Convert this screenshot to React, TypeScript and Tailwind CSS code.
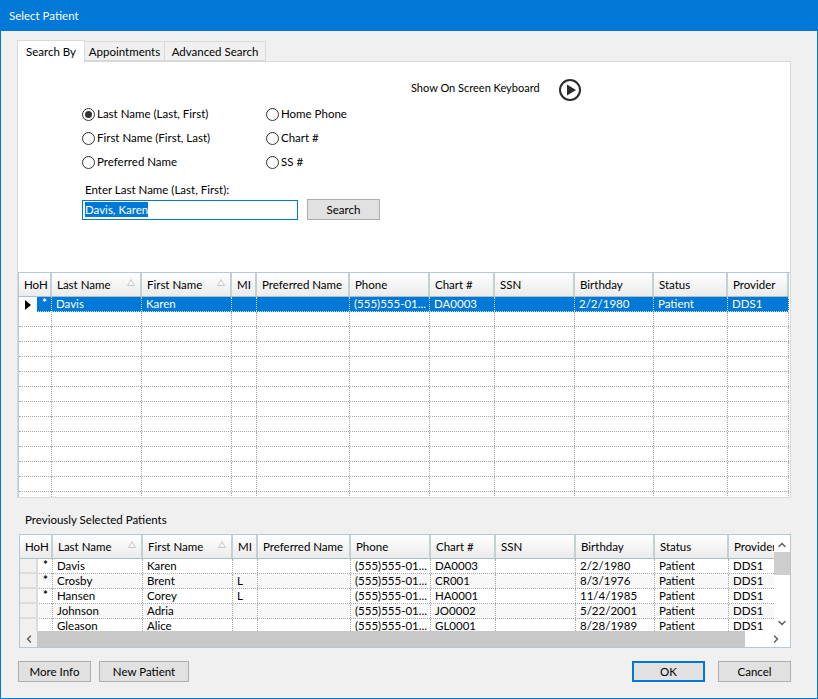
import React from "react";
import { ChevronDown, ChevronLeft, ChevronRight, ChevronUp } from "lucide-react";

const COLUMNS = [
  "HoH",
  "Last Name",
  "First Name",
  "MI",
  "Preferred Name",
  "Phone",
  "Chart #",
  "SSN",
  "Birthday",
  "Status",
  "Provider",
];

const GRID_COLS = "grid grid-cols-[33px_90px_90px_25px_93px_80px_65px_80px_79px_74px_61px]";

const RECENT_PATIENTS = [
  ["*", "Davis", "Karen", "", "", "(555)555-01...", "DA0003", "", "2/2/1980", "Patient", "DDS1"],
  ["*", "Crosby", "Brent", "L", "", "(555)555-01...", "CR001", "", "8/3/1976", "Patient", "DDS1"],
  ["*", "Hansen", "Corey", "L", "", "(555)555-01...", "HA0001", "", "11/4/1985", "Patient", "DDS1"],
  ["", "Johnson", "Adria", "", "", "(555)555-01...", "JO0002", "", "5/22/2001", "Patient", "DDS1"],
  ["", "Gleason", "Alice", "", "", "(555)555-01...", "GL0001", "", "8/28/1989", "Patient", "DDS1"],
];

const SELECTED_ROW = ["*", "Davis", "Karen", "", "", "(555)555-01...", "DA0003", "", "2/2/1980", "Patient", "DDS1"];

const HeaderRow = () => (
  <div className={`${GRID_COLS} h-[24px] w-[770px] shrink-0 border-b border-[#a9c0c4]`}>
    {COLUMNS.map((name) => (
      <div
        key={name}
        className="relative flex items-center overflow-hidden whitespace-nowrap border-r-2 border-[#c4d0d4] bg-gradient-to-b from-white to-[#ebebeb] pl-[5px] text-black"
      >
        {name}
        {(name === "Last Name" || name === "First Name") && (
          <svg className="absolute right-[5px] top-[6px]" width="8" height="7" viewBox="0 0 8 7">
            <path d="M4 .5 L7.5 6.5 L.5 6.5 Z" fill="none" stroke="#c8c8c8" />
          </svg>
        )}
      </div>
    ))}
  </div>
);

const RowHeader = ({ current = false }: { current?: boolean }) => (
  <div
    className={`flex h-full w-[18px] shrink-0 items-center justify-center ${
      current ? "bg-white" : "border-r-2 border-b-2 border-[#dcdcdc] bg-[#f0f0f0]"
    }`}
  >
    {current && (
      <svg width="6" height="10" viewBox="0 0 6 10">
        <path d="M0 0 L6 5 L0 10 Z" fill="#000" />
      </svg>
    )}
  </div>
);

const DataRow = ({
  cells,
  selected = false,
  current = false,
  alt = false,
  header = true,
}: {
  cells?: string[];
  selected?: boolean;
  current?: boolean;
  alt?: boolean;
  header?: boolean;
}) => {
  const values = cells ?? Array(11).fill("");
  const rowTone = selected
    ? "bg-[#0078d7] text-white border-[#d0e4f5]"
    : alt
      ? "bg-[#f8f8f8] text-black border-[#aaaaaa]"
      : "bg-white text-black border-[#aaaaaa]";

  return (
    <div className={`${GRID_COLS} h-[15px] w-[770px] shrink-0 border-b border-dotted ${rowTone}`}>
      {values.map((value, index) =>
        index === 0 ? (
          <div key={index} className="flex h-[15px] border-r border-dotted border-inherit">
            {header && <RowHeader current={current} />}
            <div className="flex-1 pl-[5px] font-bold leading-[12px]">{value}</div>
          </div>
        ) : (
          <div
            key={index}
            className="h-[14px] overflow-hidden whitespace-nowrap border-r border-dotted border-inherit pl-[4px] leading-[14px]"
          >
            {value}
          </div>
        ),
      )}
    </div>
  );
};

const Radio = ({ label, checked = false }: { label: string; checked?: boolean }) => (
  <label className="flex h-[24px] items-center gap-[2px] text-black">
    <span className="flex size-[13px] items-center justify-center rounded-full border border-[#333333] bg-white">
      {checked && <span className="size-[7px] rounded-full bg-[#333333]" />}
    </span>
    {label}
  </label>
);

const FlatButton = ({
  children,
  width,
  primary = false,
}: {
  children: React.ReactNode;
  width: string;
  primary?: boolean;
}) => (
  <button
    className={`h-[21px] ${width} bg-[#e1e1e1] text-black ${
      primary ? "border-2 border-[#0078d7]" : "border border-[#adadad]"
    }`}
  >
    {children}
  </button>
);

const App = () => {
  return (
    <div className="flex h-[699px] w-[818px] flex-col border border-[#0078d7] bg-[#f0f0f0] font-['Lato',sans-serif] text-[11.5px]">
      <div className="flex h-[30px] shrink-0 items-center bg-[#0078d7] pl-[8px] text-white">Select Patient</div>

      <div className="flex flex-1 flex-col pl-[16px] pr-[26px]">
        {/* Tabs */}
        <div className="relative z-10 mt-[8px] flex h-[22px] items-end">
          <div className="flex h-[23px] w-[68px] translate-y-[1px] items-start justify-center self-start border border-b-0 border-[#d9d9d9] bg-white pt-[2px]">
            Search By
          </div>
          <div className="flex h-[20px] w-[80px] items-center justify-center border border-l-0 border-[#d9d9d9] bg-[#f0f0f0] pt-[2px]">
            Appointments
          </div>
          <div className="flex h-[20px] w-[101px] items-center justify-center border border-l-0 border-[#d9d9d9] bg-[#f0f0f0] pt-[2px]">
            Advanced Search
          </div>
        </div>

        {/* Search panel */}
        <div className="flex h-[437px] w-[774px] shrink-0 flex-col border border-[#d9d9d9] bg-white">
          <div className="h-[210px] shrink-0">
            <div className="flex items-center pl-[393px] pt-[16px]">
              <span className="mb-[4px] w-[147px] text-[11px] text-black">Show On Screen Keyboard</span>
              <svg width="24" height="24" viewBox="0 0 24 24">
                <circle cx="12" cy="12" r="10" fill="none" stroke="#2b2b2b" strokeWidth="2" />
                <path d="M9 6.5 L18 12 L9 17.5 Z" fill="#2b2b2b" />
              </svg>
            </div>
            <div className="ml-[64px] grid w-[300px] grid-cols-[184px_1fr]">
              <Radio label="Last Name (Last, First)" checked />
              <Radio label="Home Phone" />
              <Radio label="First Name (First, Last)" />
              <Radio label="Chart #" />
              <Radio label="Preferred Name" />
              <Radio label="SS #" />
            </div>
            <div className="ml-[67px] mt-[8px] leading-[15px] text-black">Enter Last Name (Last, First):</div>
            <div className="ml-[64px] mt-[2px] flex items-center gap-[9px]">
              <div className="flex h-[20px] w-[216px] items-center border border-[#0078d7] bg-white pl-[2px]">
                <span className="bg-[#0078d7] leading-[15px] text-white">Davis, Karen</span>
              </div>
              <FlatButton width="w-[73px]">Search</FlatButton>
            </div>
          </div>

          {/* Search results */}
          <div className="flex h-[225px] flex-col overflow-hidden border-l border-t border-[#b5c9d5] pr-[1px]">
            <HeaderRow />
            <DataRow cells={SELECTED_ROW} selected current />
            {Array.from({ length: 13 }, (_, index) => (
              <DataRow key={index} header={false} />
            ))}
          </div>
        </div>

        <div className="ml-[8px] mt-[14px] mb-[1px] leading-[15px] text-black">Previously Selected Patients</div>

        {/* Recent patients */}
        <div className="ml-[2px] mt-[6px] flex h-[114px] w-[772px] shrink-0 flex-col border border-[#b5c9d5] bg-white">
          <div className="flex h-[96px] shrink-0">
            <div className="flex w-[754px] flex-col overflow-hidden">
              <HeaderRow />
              {RECENT_PATIENTS.map((cells, index) => (
                <DataRow key={cells[1]} cells={cells} alt={index % 2 === 1} />
              ))}
            </div>
            <div className="flex w-[16px] flex-col items-center justify-between bg-white pb-[2px] pt-[4px] text-[#606060]">
              <ChevronUp size={12} strokeWidth={3} />
              <div className="absolute mt-[13px] h-[23px] w-[16px] bg-[#cdcdcd]" />
              <ChevronDown size={12} strokeWidth={3} />
            </div>
          </div>
          <div className="flex h-[16px] items-center text-[#606060]">
            <div className="flex h-full w-[17px] items-center justify-center bg-[#f0f0f0]">
              <ChevronLeft size={12} strokeWidth={3} />
            </div>
            <div className="h-full w-[708px] bg-[#c8c8c8]" />
            <div className="flex flex-1 justify-end pr-[8px]">
              <ChevronRight size={12} strokeWidth={3} />
            </div>
          </div>
        </div>

        {/* Footer buttons */}
        <div className="mt-[13px] flex w-[774px] items-center">
          <FlatButton width="w-[73px] ml-[1px]">More Info</FlatButton>
          <FlatButton width="w-[90px] ml-[8px]">New Patient</FlatButton>
          <FlatButton width="w-[73px] ml-auto" primary>
            OK
          </FlatButton>
          <FlatButton width="w-[73px] ml-[13px]">Cancel</FlatButton>
        </div>
      </div>
    </div>
  );
};

export default App;
